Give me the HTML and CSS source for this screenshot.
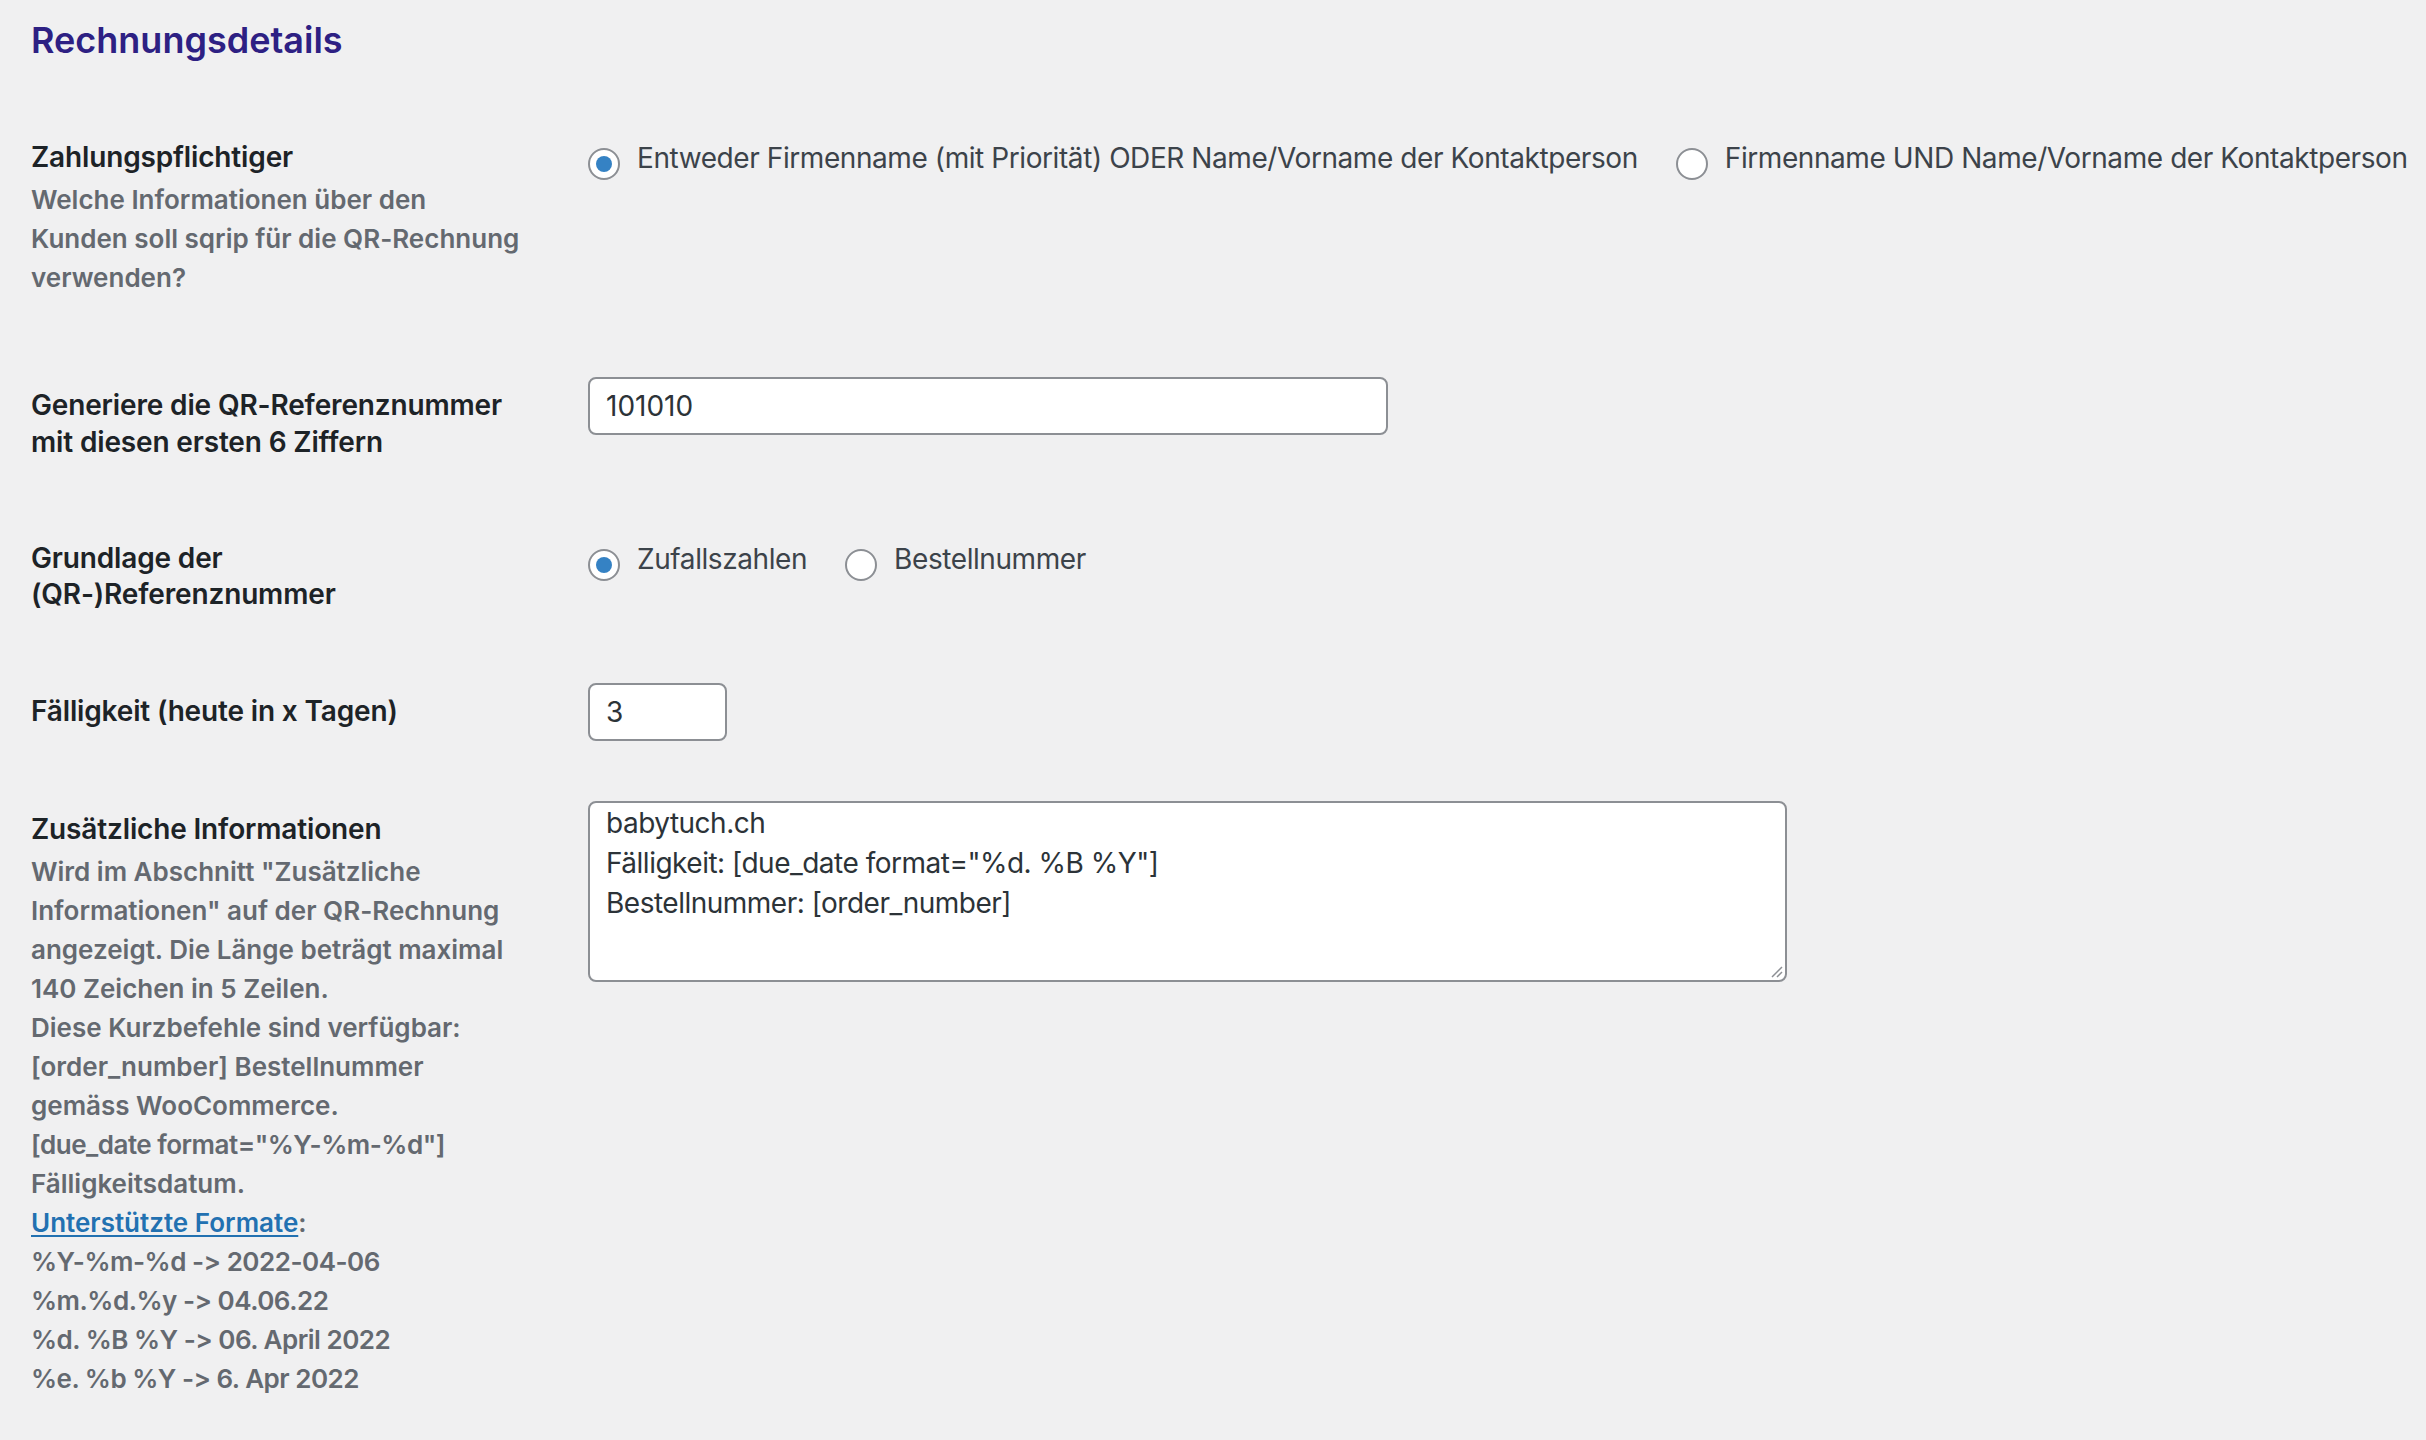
FILE: index.html
```html
<!DOCTYPE html>
<html lang="de">
<head>
<meta charset="utf-8">
<title>Rechnungsdetails</title>
<link rel="stylesheet" href="styles.css">
</head>
<body>
<div class="wrap">
  <h2 class="title">Rechnungsdetails</h2>

  <div class="form-table">
    <div class="row">
      <div class="th">
        <div class="label">Zahlungspflichtiger</div>
        <p class="description">Welche Informationen über den<br>Kunden soll sqrip für die QR-Rechnung<br>verwenden?</p>
      </div>
      <div class="td">
        <div class="radios">
          <label class="radio-label"><span class="radio checked"></span><span>Entweder Firmenname (mit Priorität) ODER Name/Vorname der Kontaktperson</span></label>
          <label class="radio-label"><span class="radio"></span><span>Firmenname UND Name/Vorname der Kontaktperson</span></label>
        </div>
      </div>
    </div>

    <div class="row">
      <div class="th">
        <div class="label">Generiere die QR-Referenznummer<br>mit diesen ersten 6 Ziffern</div>
      </div>
      <div class="td">
        <div class="input regular">101010</div>
      </div>
    </div>

    <div class="row">
      <div class="th">
        <div class="label">Grundlage der<br>(QR-)Referenznummer</div>
      </div>
      <div class="td">
        <div class="radios">
          <label class="radio-label"><span class="radio checked"></span><span>Zufallszahlen</span></label>
          <label class="radio-label"><span class="radio"></span><span>Bestellnummer</span></label>
        </div>
      </div>
    </div>

    <div class="row">
      <div class="th">
        <div class="label">Fälligkeit (heute in x Tagen)</div>
      </div>
      <div class="td">
        <div class="input small">3</div>
      </div>
    </div>

    <div class="row">
      <div class="th">
        <div class="label">Zusätzliche Informationen</div>
        <p class="description">Wird im Abschnitt "Zusätzliche<br>Informationen" auf der QR-Rechnung<br>angezeigt. Die Länge beträgt maximal<br>140 Zeichen in 5 Zeilen.<br>Diese Kurzbefehle sind verfügbar:<br>[order_number] Bestellnummer<br>gemäss WooCommerce.<br><span class="fmt">[due_date format="%Y-%m-%d"]</span><br>Fälligkeitsdatum.<br><a class="link" href="#">Unterstützte Formate</a>:<br><span class="fmt">%Y-%m-%d -&gt; 2022-04-06</span><br><span class="fmt">%m.%d.%y -&gt; 04.06.22</span><br><span class="fmt">%d. %B %Y -&gt; 06. April 2022</span><br><span class="fmt">%e. %b %Y -&gt; 6. Apr 2022</span></p>
      </div>
      <div class="td">
        <div class="textarea">
          <div class="ta-line">babytuch.ch</div>
          <div class="ta-line">Fälligkeit: [due_date format="%d. %B %Y"]</div>
          <div class="ta-line">Bestellnummer: [order_number]</div>
          <svg class="grip" width="14" height="14" viewBox="0 0 14 14"><path d="M13 3 L3 13 M13 8 L8 13" stroke="#8c8f94" stroke-width="1.5" fill="none"/></svg>
        </div>
      </div>
    </div>
  </div>
</div>
</body>
</html>
```

FILE: styles.css
```css
html, body {
  margin: 0;
  padding: 0;
  background: #f0f0f1;
}
body {
  font-family: Inter, "Noto Sans", "Liberation Sans", sans-serif;
  font-variant-ligatures: no-contextual;
  font-feature-settings: "calt" 0;
  color: #3c434a;
  width: 2426px;
  height: 1440px;
  overflow: hidden;
}
.wrap {
  padding-left: 31px;
}
.title {
  font-size: 36px;
  line-height: 46.8px;
  font-weight: 600;
  color: #2d2083;
  margin: 17px 0 35px;
  letter-spacing: 0;
}
.row {
  display: grid;
  grid-template-columns: 537px 1fr;
}
.th {
  padding: 40px 20px 40px 0;
  white-space: nowrap;
}
.label {
  font-size: 28px;
  line-height: 36.4px;
  font-weight: 600;
  color: #1d2327;
  letter-spacing: -0.15px;
}
.description {
  margin: 5px 0 10px;
  font-size: 26px;
  line-height: 39px;
  font-weight: 600;
  color: #646970;
  letter-spacing: 0;
}
.fmt {
  letter-spacing: -0.5px;
}
.link {
  color: #2271b1;
  text-decoration: underline;
  text-underline-offset: 3px;
  text-decoration-thickness: 2px;
}
.td {
  padding: 30px 20px;
}
.radios {
  display: flex;
  gap: 38px;
  white-space: nowrap;
}
.radio-label {
  display: inline-flex;
  align-items: flex-start;
  gap: 17px;
  margin: 10px 0 14px;
  font-size: 28px;
  line-height: 39px;
  color: #3c434a;
  letter-spacing: -0.42px;
}
.radio {
  box-sizing: border-box;
  flex: none;
  width: 32px;
  height: 32px;
  margin-top: 9px;
  border: 2px solid #8c8f94;
  border-radius: 50%;
  background: #fff;
  display: flex;
  align-items: center;
  justify-content: center;
}
.radio.checked::before {
  content: "";
  width: 16px;
  height: 16px;
  border-radius: 50%;
  background: #3582c4;
}
.input {
  box-sizing: border-box;
  height: 58px;
  border: 2px solid #8c8f94;
  border-radius: 8px;
  background: #fff;
  padding: 0 16px;
  font-size: 28px;
  line-height: 54px;
  color: #2c3338;
}
.input.regular {
  width: 800px;
}
.input.small {
  width: 139px;
}
.textarea {
  position: relative;
  box-sizing: border-box;
  width: 1199px;
  height: 181px;
  border: 2px solid #8c8f94;
  border-radius: 8px;
  background: #fff;
  padding: 0 16px;
  font-size: 28px;
  line-height: 40px;
  color: #2c3338;
  letter-spacing: -0.5px;
}
.grip {
  position: absolute;
  right: 2px;
  bottom: 2px;
}
```
